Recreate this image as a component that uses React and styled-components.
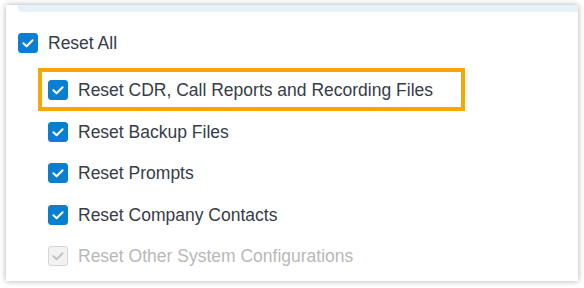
import React from "react";
import styled, { createGlobalStyle } from "styled-components";

const Global = createGlobalStyle`
  html, body { margin: 0; padding: 0; background: #ffffff; }
  body { font-family: "Liberation Sans", Arial, sans-serif; }
`;

const Page = styled.div`
  width: 584px;
  height: 288px;
  padding: 5px 0 0 6px;
  box-sizing: border-box;
  overflow: hidden;
`;

const Card = styled.div`
  width: 572px;
  height: 276px;
  background: #ffffff;
  box-shadow: 0 0 6px rgba(0, 0, 0, 0.32);
  display: flex;
  flex-direction: column;
`;

const TopBar = styled.div`
  margin-left: 12px;
  height: 7px;
  background: #e7f1fa;
  border-bottom-left-radius: 4px;
`;

const Body = styled.div`
  padding: 21px 0 0 12px;
  display: flex;
  flex-direction: column;
`;

const SubList = styled.div`
  margin: 27px 0 0 30px;
  display: flex;
  flex-direction: column;
  gap: 21.6px;
`;

const Row = styled.label`
  position: relative;
  display: flex;
  align-items: center;
  gap: 10px;
  height: 20px;
  font-size: 17.5px;
  line-height: 20px;
  color: ${(p) => (p.$disabled ? "#b8b8b8" : "#363c48")};
  white-space: nowrap;

  ${(p) =>
    p.$highlight &&
    `
    &::after {
      content: "";
      position: absolute;
      left: -10px;
      top: -12px;
      width: 427px;
      height: 43px;
      box-sizing: border-box;
      border: 4px solid #f6a800;
      pointer-events: none;
    }
  `}
`;

const Box = styled.span`
  width: 20px;
  height: 20px;
  flex: none;
  box-sizing: border-box;
  border-radius: 3px;
  display: flex;
  align-items: center;
  justify-content: center;
  background: ${(p) => (p.$disabled ? "#f2f2f2" : "#0a7fd2")};
  border: 1px solid ${(p) => (p.$disabled ? "#d6d6d6" : "#0a7fd2")};
`;

function Check({ disabled }) {
  return (
    <Box $disabled={disabled}>
      <svg width="14" height="14" viewBox="0 0 14 14">
        <path
          d="M2.4 7.2 L5.6 10.2 L11.6 4.2"
          fill="none"
          stroke={disabled ? "#c2c2c2" : "#ffffff"}
          strokeWidth="2"
          strokeLinecap="round"
          strokeLinejoin="round"
        />
      </svg>
    </Box>
  );
}

const items = [
  { label: "Reset CDR, Call Reports and Recording Files", highlight: true },
  { label: "Reset Backup Files" },
  { label: "Reset Prompts" },
  { label: "Reset Company Contacts" },
  { label: "Reset Other System Configurations", disabled: true },
];

export default function App() {
  return (
    <>
      <Global />
      <Page>
        <Card>
          <TopBar />
          <Body>
            <Row>
              <Check />
              Reset All
            </Row>
            <SubList>
              {items.map((it) => (
                <Row key={it.label} $highlight={it.highlight} $disabled={it.disabled}>
                  <Check disabled={it.disabled} />
                  {it.label}
                </Row>
              ))}
            </SubList>
          </Body>
        </Card>
      </Page>
    </>
  );
}
